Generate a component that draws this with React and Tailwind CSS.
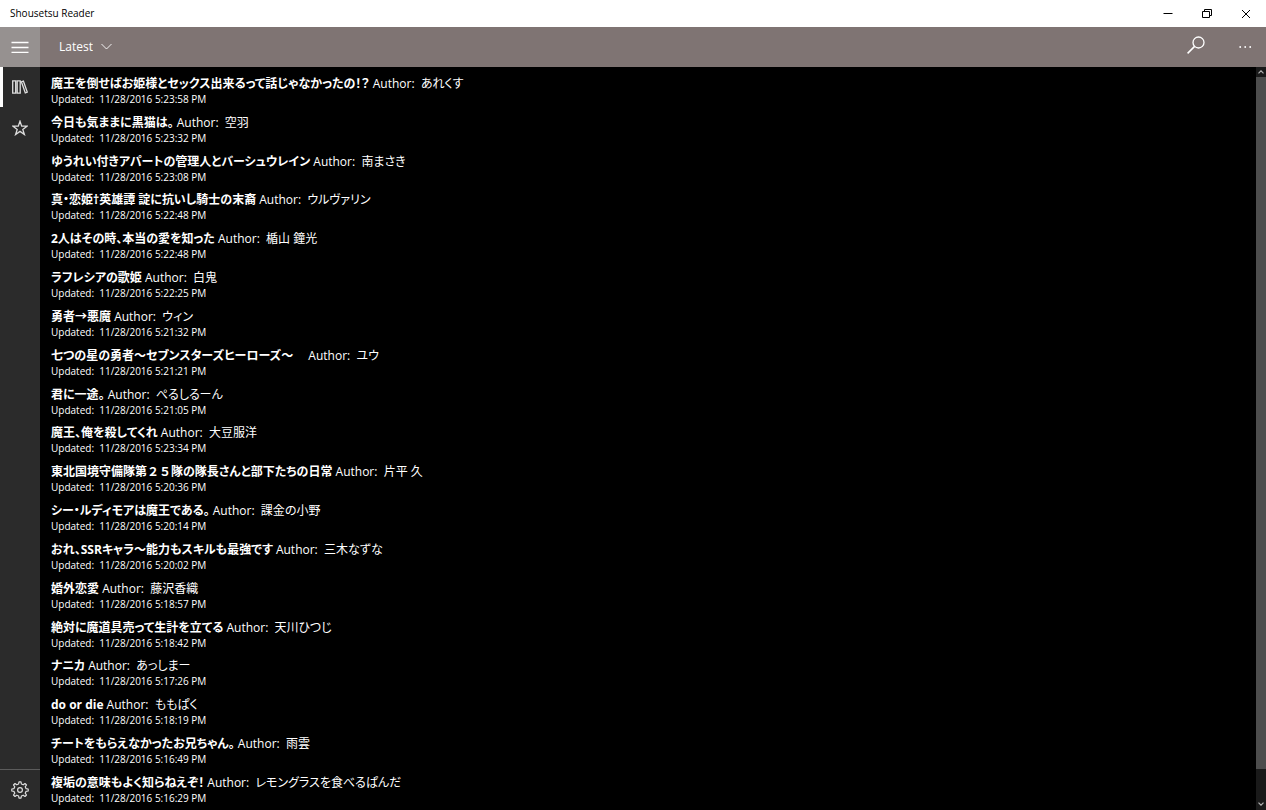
import React, { useState } from "react";

const novels = [
  { title: "魔王を倒せばお姫様とセックス出来るって話じゃなかったの！？", author: "あれくす", updated: "5:23:58 PM" },
  { title: "今日も気ままに黒猫は。", author: "空羽", updated: "5:23:32 PM" },
  { title: "ゆうれい付きアパートの管理人とバーシュウレイン", author: "南まさき", updated: "5:23:08 PM" },
  { title: "真・恋姫†英雄譚 諚に抗いし騎士の末裔", author: "ウルヴァリン", updated: "5:22:48 PM" },
  { title: "2人はその時、本当の愛を知った", author: "楯山 鐘光", updated: "5:22:48 PM" },
  { title: "ラフレシアの歌姫", author: "白鬼", updated: "5:22:25 PM" },
  { title: "勇者→悪魔", author: "ウィン", updated: "5:21:32 PM" },
  { title: "七つの星の勇者～セブンスターズヒーローズ～　", author: "ユウ", updated: "5:21:21 PM" },
  { title: "君に一途。", author: "ぺるしるーん", updated: "5:21:05 PM" },
  { title: "魔王、俺を殺してくれ", author: "大豆服洋", updated: "5:23:34 PM" },
  { title: "東北国境守備隊第２５隊の隊長さんと部下たちの日常", author: "片平 久", updated: "5:20:36 PM" },
  { title: "シー・ルディモアは魔王である。", author: "課金の小野", updated: "5:20:14 PM" },
  { title: "おれ、SSRキャラ～能力もスキルも最強です", author: "三木なずな", updated: "5:20:02 PM" },
  { title: "婚外恋愛", author: "藤沢香織", updated: "5:18:57 PM" },
  { title: "絶対に魔道具売って生計を立てる", author: "天川ひつじ", updated: "5:18:42 PM" },
  { title: "ナニカ", author: "あっしまー", updated: "5:17:26 PM" },
  { title: "do or die", author: "ももぱく", updated: "5:18:19 PM" },
  { title: "チートをもらえなかったお兄ちゃん。", author: "雨雲", updated: "5:16:49 PM" },
  { title: "複垢の意味もよく知らねえぞ！", author: "レモングラスを食べるぱんだ", updated: "5:16:29 PM" },
];

const TitleBar = () => (
  <div className="flex h-[27px] shrink-0 items-center justify-between bg-white pr-px pl-[10px] text-black">
    <h1 className="text-[10px]">Shousetsu Reader</h1>
    <div className="flex h-full">
      <button aria-label="Minimize" className="flex w-[39px] items-center justify-center">
        <svg width="10" height="10" viewBox="0 0 10 10" stroke="currentColor" fill="none">
          <path d="M0.5 4.5h9" />
        </svg>
      </button>
      <button aria-label="Restore" className="flex w-[39px] items-center justify-center">
        <svg width="10" height="10" viewBox="0 0 10 10" stroke="currentColor" fill="none">
          <path d="M0.5 2.5h7v6h-7zM2.5 2.5v-2h7v6h-2" />
        </svg>
      </button>
      <button aria-label="Close" className="flex w-[39px] items-center justify-center">
        <svg width="10" height="10" viewBox="0 0 10 10" stroke="currentColor" fill="none">
          <path d="M1 1l8 8M9 1l-8 8" />
        </svg>
      </button>
    </div>
  </div>
);

const CommandBar = () => {
  const [sort, setSort] = useState("Latest");

  return (
    <header className="flex h-10 shrink-0 bg-[#7f7473] text-white">
      <button aria-label="Menu" className="flex w-10 items-center justify-center bg-[#969190]">
        <svg width="18" height="12" viewBox="0 0 18 12" stroke="currentColor" fill="none">
          <path d="M0.5 1.5h17M0.5 6.5h17M0.5 11.5h17" strokeWidth="1.3" />
        </svg>
      </button>
      <label className="flex items-center gap-2 pb-px pl-[19px]">
        <select
          aria-label="Sort order"
          value={sort}
          onChange={(e) => setSort(e.target.value)}
          className="appearance-none bg-transparent text-[12px] leading-5"
        >
          <option>Latest</option>
        </select>
        <svg width="11" height="7" viewBox="0 0 11 7" stroke="currentColor" fill="none" className="pointer-events-none">
          <path d="M0.5 1l5 5 5-5" strokeWidth="0.9" />
        </svg>
      </label>
      <div className="ml-auto flex">
        <button aria-label="Search" className="flex w-12 items-center justify-center pb-1">
          <svg width="18" height="18" viewBox="0 0 18 18" stroke="currentColor" fill="none">
            <circle cx="11.5" cy="6.5" r="5.5" strokeWidth="1.3" />
            <path d="M7.6 10.4L0.6 17.4" strokeWidth="1.5" />
          </svg>
        </button>
        <button aria-label="More" className="ml-1 flex w-[42px] items-center justify-center">
          <svg width="13" height="2" viewBox="0 0 13 2" fill="currentColor">
            <circle cx="1.2" cy="1" r="0.9" />
            <circle cx="6.2" cy="1" r="0.9" />
            <circle cx="11.2" cy="1" r="0.9" />
          </svg>
        </button>
      </div>
    </header>
  );
};

const SideNav = () => (
  <nav className="flex w-10 shrink-0 flex-col bg-[#2b2b2b] text-[#dedede]">
    <button aria-label="Library" className="flex h-10 items-center border-l-[3px] border-white pl-[9px]">
      <svg width="16" height="14" viewBox="0 0 16 14" stroke="currentColor" fill="none">
        <path d="M0.7 0.9h3v12.2h-3zM5.2 0.9h3v12.2h-3zM9.4 1.8l2-0.8 3.9 11.2-2 0.8z" strokeWidth="1.3" />
      </svg>
    </button>
    <button aria-label="Favorites" className="flex h-[42px] items-center justify-center">
      <svg width="16" height="16" viewBox="0 0 16 16" stroke="currentColor" fill="none">
        <path d="M8 1.2l1.7 5h5.3l-4.2 3.2 1.6 5.1L8 11.4l-4.4 3.1 1.6-5.1-4.2-3.2h5.3z" strokeWidth="1.3" />
      </svg>
    </button>
    <button
      aria-label="Settings"
      className="mt-auto flex h-[41px] items-center justify-center border-t border-[#5c5c5c]"
    >
      <svg
        width="18"
        height="18"
        viewBox="0 0 18 18"
        stroke="currentColor"
        strokeWidth="1.2"
        fill="none"
        strokeLinejoin="round"
      >
        <path d="M7.6 3L8 0.8h2L10.4 3l1.8 0.8L14 2.5 15.5 4l-1.3 1.8 0.8 1.8 2.2 0.4v2l-2.2 0.4-0.8 1.8 1.3 1.8-1.5 1.5-1.8-1.3-1.8 0.8L10 17.2H8L7.6 15l-1.8-0.8L4 15.5 2.5 14l1.3-1.8L3 10.4 0.8 10V8L3 7.6l0.8-1.8L2.5 4 4 2.5l1.8 1.3z" />
        <circle cx="9" cy="9" r="2.4" />
      </svg>
    </button>
  </nav>
);

const ScrollRail = () => (
  <div className="flex w-[10px] shrink-0 flex-col bg-[#1a1a1a] text-[#b0b0b0]">
    <button aria-label="Scroll up" className="flex h-[10px] items-center justify-center">
      <svg width="6" height="4" viewBox="0 0 6 4" stroke="currentColor" fill="none">
        <path d="M0.5 3.3l2.5-2.5 2.5 2.5" strokeWidth="1.2" />
      </svg>
    </button>
    <div className="flex-1 bg-[#4d4d4d]" />
    <button aria-label="Scroll down" className="flex h-[41px] items-end justify-center pb-1">
      <svg width="6" height="4" viewBox="0 0 6 4" stroke="currentColor" fill="none">
        <path d="M0.5 0.7l2.5 2.5 2.5-2.5" strokeWidth="1.2" />
      </svg>
    </button>
  </div>
);

// Kana are set proportionally, full-width digits keep their full advance
const NovelTitle = ({ text }) => (
  <strong className="font-bold">
    {text.split(/([０-９]+)/).map((part, i) =>
      i % 2 ? (
        <span key={i} className="[font-feature-settings:normal]">
          {part}
        </span>
      ) : (
        part
      )
    )}
  </strong>
);

const App = () => {
  return (
    <div className="flex min-h-screen flex-col bg-black font-['Open_Sans','Noto_Sans_CJK_JP',sans-serif] text-white">
      <TitleBar />
      <CommandBar />
      <div className="flex flex-1">
        <SideNav />
        <main className="flex flex-1 pl-[11px]">
          <ul className="flex flex-1 flex-col justify-between pt-[7px] pb-[5px]" lang="ja">
            {novels.map(({ title, author, updated }) => (
              <li key={title}>
                <a href="#" className="block whitespace-pre">
                  <p className="h-[18px] text-[12px] leading-5 [font-feature-settings:'palt']">
                    <NovelTitle text={title} />
                    {` Author:  ${author}`}
                  </p>
                  <p className="h-[14px] text-[10px] leading-[14px]">{`Updated:  11/28/2016 ${updated}`}</p>
                </a>
              </li>
            ))}
          </ul>
        </main>
        <ScrollRail />
      </div>
    </div>
  );
};

export default App;
